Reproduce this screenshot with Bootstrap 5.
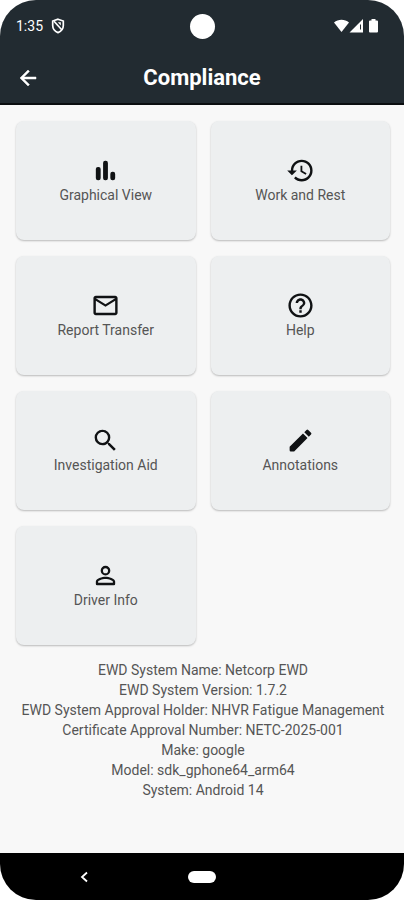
<!DOCTYPE html>
<html lang="en">
<head>
<meta charset="utf-8">
<meta name="viewport" content="width=device-width, initial-scale=1">
<title>Compliance</title>
<link href="https://cdn.jsdelivr.net/npm/bootstrap@5.3.0/dist/css/bootstrap.min.css" rel="stylesheet">
<style>
  body { font-family: Roboto, "Liberation Sans", sans-serif; background: #fff; }
  .phone { background: #f8f8f8; border-radius: 36px; }
  .top-area { background: #222b31; border-bottom: 2px solid #0b0e10; }
  .status-bar { height: 52px; padding: 0 16px; font-size: 14px; line-height: 20px; }
  .side { flex: 1 1 0; }
  .status-icons { margin-right: 9px; }
  .camera { width: 25px; height: 25px; }
  .app-bar { height: 51px; padding: 0 16px; }
  .app-bar h1 { font-size: 22px; line-height: 28px; }
  .back-btn { width: 24px; height: 24px; }
  .content-area { padding: 16px 14px 16px 16px; }
  .tiles { display: grid; grid-template-columns: 1fr 1fr; gap: 16px 15px; }
  .tile { height: 119px; padding-bottom: 6px; border-radius: 8px; background: #edeff0; color: #555; font-size: 14px; line-height: 20px; box-shadow: 0 1px 2px rgba(0, 0, 0, .25); }
  .tile:hover, .tile:active { background: #e6e9ea; }
  .tile svg { width: 29px; height: 29px; fill: #101214; }
  .system-info { margin-top: 15px; color: #555; font-size: 14px; line-height: 20px; }
  .nav-keys { height: 47px; background: #000; }
  .home-key { width: 28px; height: 12px; }
  .key-back { width: 24px; height: 24px; margin-right: 20px; }
</style>
</head>
<body>
<div class="phone d-flex flex-column min-vh-100 overflow-hidden">
  <header class="top-area text-white">
    <div class="status-bar d-flex align-items-center">
      <div class="side d-flex align-items-center gap-2">
        <span>1:35</span>
        <svg width="14" height="16" viewBox="0 0 14 16" fill="none" stroke="#fff" stroke-width="1.7" aria-hidden="true"><path d="M7 1.2 12.3 3v4.6c0 3.3-2.2 5.8-5.3 7-3.1-1.200-5.300-3.700-5.300-7V3z"/><path d="M3 3.200 11 12"/><path d="M6.800 4.200 9.800 7.400V4.200z" fill="#fff" stroke="none"/></svg>
      </div>
      <span class="camera bg-white rounded-circle"></span>
      <div class="side d-flex align-items-center justify-content-end">
        <svg class="status-icons" width="45" height="16" viewBox="0 0 45 16" fill="#fff" aria-hidden="true"><path d="M0 4.500C4.200.800 10.800.800 15 4.500L7.500 14z"/><path d="M15.500 14.500 29 1v13.500zM26 6.500v5h1v-5z" fill-rule="evenodd"/><path d="M35 3.500q0-1 1-1h1.500V1h4v1.500H43q1 0 1 1v10q0 1-1 1h-7q-1 0-1-1z"/></svg>
      </div>
    </div>
    <nav class="app-bar d-flex align-items-center" aria-label="Page">
      <div class="side d-flex">
        <button type="button" class="back-btn btn p-0 border-0 d-flex" aria-label="Back"><svg width="24" height="24" viewBox="0 0 24 24" fill="#fff" stroke="#fff" stroke-width=".5"><path d="M20 11H7.830l5.590-5.590L12 4l-8 8 8 8 1.410-1.410L7.830 13H20z"/></svg></button>
      </div>
      <h1 class="m-0 fw-bold">Compliance</h1>
      <div class="side"></div>
    </nav>
  </header>

  <main class="content-area flex-grow-1">
    <div class="tiles">
      <button type="button" class="tile btn border-0 d-flex flex-column align-items-center justify-content-center">
        <svg viewBox="0 0 24 24" aria-hidden="true"><rect x="4" y="9" width="4" height="11" rx="1.800"/><rect x="10" y="4" width="4" height="16" rx="1.800"/><rect x="16" y="13" width="4" height="7" rx="1.800"/></svg>
        <span>Graphical View</span>
      </button>
      <button type="button" class="tile btn border-0 d-flex flex-column align-items-center justify-content-center">
        <svg viewBox="0 0 24 24" aria-hidden="true"><path d="M13 3a9 9 0 0 0-9 9H1l3.890 3.890.070.140L9 12H6c0-3.870 3.130-7 7-7s7 3.130 7 7-3.130 7-7 7c-1.930 0-3.680-.790-4.940-2.060l-1.420 1.420A8.954 8.954 0 0 0 13 21a9 9 0 0 0 0-18zm-1 5v5l4.280 2.540.720-1.210-3.500-2.080V8H12z"/></svg>
        <span>Work and Rest</span>
      </button>
      <button type="button" class="tile btn border-0 d-flex flex-column align-items-center justify-content-center">
        <svg viewBox="0 0 24 24" aria-hidden="true"><path d="M22 6c0-1.100-.9-2-2-2H4c-1.100 0-2 .9-2 2v12c0 1.100.9 2 2 2h16c1.100 0 2-.9 2-2V6zm-2 0-8 5-8-5h16zm0 12H4V8l8 5 8-5v10z"/></svg>
        <span>Report Transfer</span>
      </button>
      <button type="button" class="tile btn border-0 d-flex flex-column align-items-center justify-content-center">
        <svg viewBox="0 0 24 24" aria-hidden="true"><path d="M11 18h2v-2h-2v2zm1-16C6.480 2 2 6.480 2 12s4.480 10 10 10 10-4.480 10-10S17.520 2 12 2zm0 18c-4.410 0-8-3.590-8-8s3.590-8 8-8 8 3.590 8 8-3.590 8-8 8zm0-14c-2.210 0-4 1.790-4 4h2c0-1.100.9-2 2-2s2 .9 2 2c0 2-3 1.750-3 5h2c0-2.250 3-2.500 3-5 0-2.210-1.790-4-4-4z"/></svg>
        <span>Help</span>
      </button>
      <button type="button" class="tile btn border-0 d-flex flex-column align-items-center justify-content-center">
        <svg viewBox="0 0 24 24" aria-hidden="true"><path d="M15.500 14h-.790l-.280-.270A6.471 6.471 0 0 0 16 9.500 6.500 6.500 0 1 0 9.500 16c1.610 0 3.090-.590 4.230-1.570l.270.280v.790l5 4.990L20.490 19l-4.990-5zm-6 0C7.010 14 5 11.990 5 9.500S7.010 5 9.500 5 14 7.010 14 9.500 11.990 14 9.500 14z"/></svg>
        <span>Investigation Aid</span>
      </button>
      <button type="button" class="tile btn border-0 d-flex flex-column align-items-center justify-content-center">
        <svg viewBox="0 0 24 24" aria-hidden="true"><path d="M3 17.250V20q0 1 1 1h2.750L17.810 9.940l-3.750-3.750L3 17.250zM20.710 7.040a.996.996 0 0 0 0-1.410l-2.340-2.340a.996.996 0 0 0-1.410 0l-1.830 1.830 3.750 3.750 1.830-1.830z"/></svg>
        <span>Annotations</span>
      </button>
      <button type="button" class="tile btn border-0 d-flex flex-column align-items-center justify-content-center">
        <svg viewBox="0 0 24 24" aria-hidden="true"><path d="M12 5.900a2.100 2.100 0 1 1 0 4.200 2.100 2.100 0 0 1 0-4.200m0 9c2.970 0 6.100 1.460 6.100 2.100v1.100H5.900V17c0-.640 3.130-2.100 6.100-2.100M12 4a4 4 0 1 0 0 8 4 4 0 0 0 0-8zm0 9c-2.670 0-8 1.340-8 4v2q0 1 1 1h14q1 0 1-1v-2c0-2.660-5.330-4-8-4z"/></svg>
        <span>Driver Info</span>
      </button>
    </div>
    <div class="system-info text-center">
      <div>EWD System Name: Netcorp EWD</div>
      <div>EWD System Version: 1.7.2</div>
      <div>EWD System Approval Holder: NHVR Fatigue Management</div>
      <div>Certificate Approval Number: NETC-2025-001</div>
      <div>Make: google</div>
      <div>Model: sdk_gphone64_arm64</div>
      <div>System: Android 14</div>
    </div>
  </main>

  <footer class="nav-keys d-flex align-items-center">
    <div class="side d-flex justify-content-center">
      <button type="button" class="key-back btn p-0 border-0 d-flex align-items-center justify-content-center" aria-label="System back"><svg width="8" height="12" viewBox="0 0 8 12" fill="none" stroke="#fff" stroke-width="1.800"><path d="M7 1.500 2 6l5 4.500"/></svg></button>
    </div>
    <button type="button" class="home-key btn p-0 border-0 bg-white rounded-pill" aria-label="Home"></button>
    <div class="side"></div>
  </footer>
</div>
<script src="https://cdn.jsdelivr.net/npm/bootstrap@5.3.0/dist/js/bootstrap.bundle.min.js"></script>
</body>
</html>
